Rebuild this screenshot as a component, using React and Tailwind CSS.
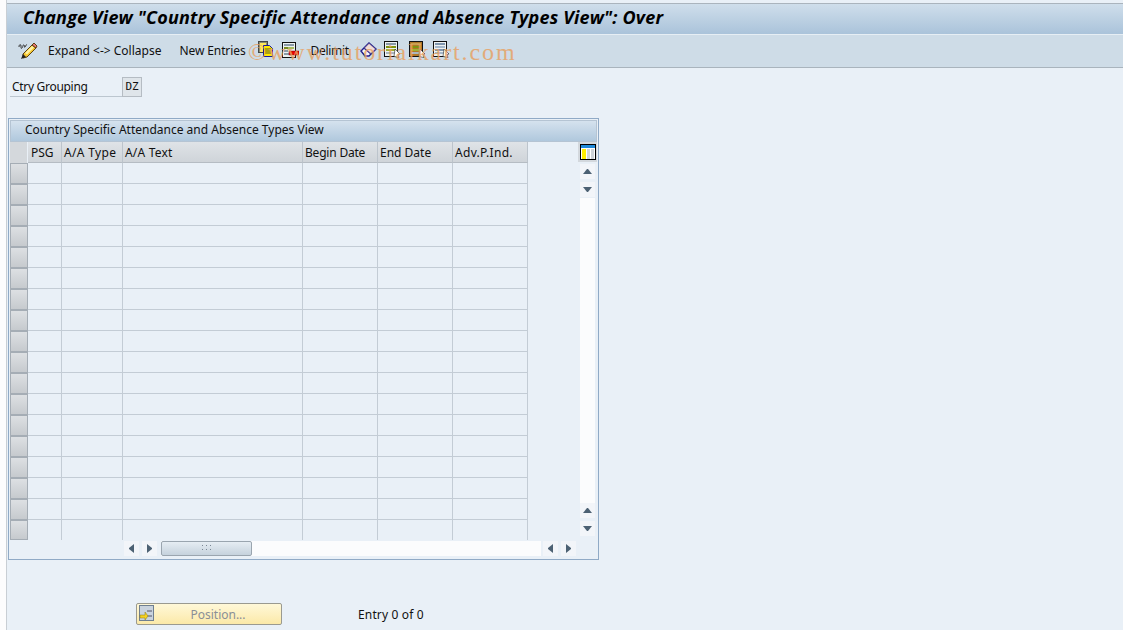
const font = { fontFamily: '"Noto Sans", sans-serif' };

const columns = [
  { label: "PSG", width: "w-[34px]", text: "pl-[3px]" },
  { label: "A/A Type", width: "w-[61px]", text: "pl-[2px] tracking-[0.35px]" },
  { label: "A/A Text", width: "w-[180px]", text: "pl-[2px] tracking-[0.2px]" },
  { label: "Begin Date", width: "w-[75px]", text: "pl-[2px] tracking-[-0.2px]" },
  { label: "End Date", width: "w-[75px]", text: "pl-[2px]" },
  { label: "Adv.P.Ind.", width: "w-[75px]", text: "pl-[2px] tracking-[0.3px]" },
];

const rows = Array.from({ length: 18 }, (_, i) => i);

const Pencil = () => (
  <svg width="20" height="18" viewBox="0 0 20 18">
    <path d="M1 5c0-3 2-3 2-1s0 3 1 2 1-4 2-3 0 3 1 2 1-3 2-2" fill="none" stroke="#333" strokeWidth="1" />
    <path d="M5 12 14 3l4 3-9 9-4 1z" fill="#f6c830" stroke="#5c4010" strokeWidth="1" />
    <path d="M7 11l7-7 2 1.500-7 7z" fill="#fff2a0" />
    <path d="M14 3l2-2 3 3-1 2z" fill="#e87878" stroke="#5c4010" strokeWidth="1" />
    <path d="M5 12l-2 5 5-2z" fill="#222" />
  </svg>
);

const CopyIcon = () => (
  <svg width="16" height="16" viewBox="0 0 16 16">
    <rect x="0.500" y="0.500" width="9" height="11" fill="#8c8c70" stroke="#444" />
    <rect x="2" y="2" width="6" height="9" fill="#ffe95a" />
    <path d="M5.500 4.500h6l3 3v8h-9z" fill="#ffe800" stroke="#1a1a9c" />
    <path d="M7 8h6M7 10h6M7 12h6" stroke="#5a5a20" />
  </svg>
);

const DeleteIcon = () => (
  <svg width="17" height="16" viewBox="0 0 17 16">
    <rect x="0.500" y="0.500" width="13" height="15" fill="#eef2f2" stroke="#111" />
    <path d="M2 2h10v2H2z" fill="#8a9aa8" />
    <path d="M2 5h4v2H2z" fill="#7a8a20" />
    <path d="M6 5h6v2H6z" fill="#a8bc60" />
    <path d="M2 8h4v2H2z" fill="#8a9aa8" />
    <path d="M2 11h5v2H2z" fill="#8a9aa8" />
    <rect x="7" y="9" width="10" height="4" fill="#e80000" stroke="#7a0000" strokeWidth="0.500" />
  </svg>
);

const EraserIcon = () => (
  <svg width="17" height="16" viewBox="0 0 17 16">
    <path d="M1 9 9 1l7 6-7 7-4 0z" fill="#f4f6fa" stroke="#1e1e8c" strokeWidth="1.400" />
    <path d="M4 6l7 6" stroke="#1e1e8c" strokeWidth="1.400" />
    <path d="M9 1l7 6-5 5-7-6z" fill="#f0b8a0" opacity="0.400" />
  </svg>
);

const ListArrow = ({ variant }) => {
  const isPlain = variant === "plain";
  const isBrown = variant === "brown";
  return (
    <svg width="17" height="17" viewBox="0 0 17 17">
      <rect x="0.500" y="0.500" width="13" height="15" fill={isBrown ? "#b07828" : "#eef2f2"} stroke="#111" />
      <path d="M2 2h10v2H2z" fill={isPlain ? "#7f96ae" : isBrown ? "#c8a050" : "#8a9aa8"} />
      <path d="M2 5h10v2H2z" fill={isPlain ? "#a5b8cb" : "#7f9410"} />
      <path d="M2 8h10v2H2z" fill={isPlain ? "#7f96ae" : "#9fb030"} />
      <path d="M2 11h10v2H2z" fill={isPlain ? "#a5b8cb" : "#aab6c0"} />
      <path d="M11 8l5 5-2 .500 1 3-5-1z" fill="#fff" stroke="#222" strokeWidth="0.600" />
    </svg>
  );
};

const Triangle = ({ dir }) => {
  const points = {
    up: "0,5 4,0 5,0 9,5",
    down: "0,0 9,0 5,5 4,5",
    left: "5,0 5,9 0,5 0,4",
    right: "0,0 0,9 5,5 5,4",
  }[dir];
  const vertical = dir === "up" || dir === "down";
  return (
    <svg width={vertical ? 9 : 5} height={vertical ? 5 : 9} viewBox={vertical ? "0 0 9 5" : "0 0 5 9"}>
      <polygon points={points} fill="#4c6173" />
    </svg>
  );
};

const ScrollButton = ({ dir }) => (
  <div className="w-[15px] h-[15px] bg-[#f2f5f9] flex items-center justify-center">
    <Triangle dir={dir} />
  </div>
);

export default function App() {
  return (
    <div className="relative w-[1123px] h-[630px] flex overflow-hidden bg-[#fcfcfd] text-[12px] text-[#111]" style={font}>
      <div className="w-[6px] shrink-0" />
      <div className="flex-1 flex flex-col border-l border-[#c8ced4] bg-[#e9f0f7]">
        {/* Title */}
        <div className="mt-[3px] h-[31px] shrink-0 pl-4 pb-[3px] flex items-center bg-gradient-to-b from-[#cfdeeb] to-[#aac3da] border-t border-[#aab4bd]">
          <h1 className="text-[18px] font-bold italic tracking-[0.17px] text-black whitespace-nowrap" style={{ fontFamily: '"Open Sans", sans-serif' }}>
            Change View "Country Specific Attendance and Absence Types View": Over
          </h1>
        </div>

        {/* Toolbar */}
        <div className="h-[34px] shrink-0 flex items-center pl-[11px] bg-[#cedce7] border-t border-[#e6eef4] border-b border-b-[#a9b4bd]">
          <Pencil />
          <span className="ml-[10px] pb-px">Expand &lt;-&gt; Collapse</span>
          <span className="ml-[18px] pb-px tracking-[-0.1px]">New Entries</span>
          <div className="ml-[12px] pb-[4px]"><CopyIcon /></div>
          <div className="ml-[8px] pb-[3px]"><DeleteIcon /></div>
          <span className="ml-[12px] w-[36px] pb-px tracking-[-0.3px]">Delimit</span>
          <div className="ml-[13px] pb-[3px]"><EraserIcon /></div>
          <div className="ml-[7px] pb-[3px]"><ListArrow variant="green" /></div>
          <div className="ml-[8px] pb-[3px]"><ListArrow variant="brown" /></div>
          <div className="ml-[7px] pb-[3px]"><ListArrow variant="plain" /></div>
        </div>

        {/* Selection field */}
        <div className="h-[26px] mt-[6px] flex items-center shrink-0 pl-[3px]">
          <span className="w-[112px] h-[20px] pl-[2px] leading-[20px] border-b border-[#bcc6cf] tracking-[-0.3px]">Ctry Grouping</span>
          <span className="w-[20px] h-[20px] bg-[#dfe5ea] border border-[#b5bcc3] flex items-center justify-center text-[11px]" style={{ fontFamily: '"DejaVu Sans Mono", monospace' }}>DZ</span>
        </div>

        {/* Table panel */}
        <div className="ml-[1px] mt-[18px] w-[591px] h-[442px] shrink-0 border border-[#90aac6] p-px flex flex-col">
          <div className="h-[22px] shrink-0 pl-[14px] pb-[2px] flex items-center border border-[#b5c4d3] bg-gradient-to-b from-[#d5e2ee] to-[#b0c8dd]">
            Country Specific Attendance and Absence Types View
          </div>
          <div className="flex flex-1">
            <div className="w-[518px]">
              <div className="flex h-[21px]">
                <div className="w-[18px] bg-[#d4d8dc] border-r border-[#e9f0f7]" />
                {columns.map((col) => (
                  <div key={col.label} className={`${col.width} ${col.text} leading-[21px] bg-gradient-to-b from-[#dfe3e7] to-[#cfd4d9] border-r border-[#bcc4cc] border-b border-b-[#b5bcc3]`}>
                    {col.label}
                  </div>
                ))}
              </div>
              {rows.map((row) => (
                <div key={row} className={row === 17 ? "flex h-[20px]" : "flex h-[21px]"}>
                  <div className="w-[18px] bg-gradient-to-b from-[#dde0e3] to-[#c6cace] border border-[#a5adb5]" />
                  {columns.map((col) => (
                    <div key={col.label} className={`${col.width} border-r border-[#c3ccd5] ${row === 17 ? "" : "border-b border-b-[#c3ccd5]"}`} />
                  ))}
                </div>
              ))}
            </div>
            <div className="ml-[50px] w-[19px] flex flex-col items-center">
              <div className="w-[19px] h-[20px] pt-[2px] bg-[#d3d8dd] flex items-start justify-center">
                <svg width="16" height="16" viewBox="0 0 16 16">
                  <rect x="0.500" y="0.500" width="15" height="15" fill="#fff" stroke="#000" />
                  <rect x="1" y="1" width="14" height="3" fill="#1e88d8" />
                  <rect x="2" y="5" width="4" height="10" fill="#ffee00" />
                  <rect x="7" y="5" width="3" height="10" fill="#cfd4d8" />
                  <rect x="11" y="5" width="3" height="10" fill="#cfd4d8" />
                </svg>
              </div>
              <div className="mt-[2px] flex flex-col gap-[3px] items-center">
                <ScrollButton dir="up" />
                <ScrollButton dir="down" />
              </div>
              <div className="w-[15px] h-[305px] mt-[1px] bg-[#fbfcfd]" />
              <div className="flex flex-col gap-[3px] items-center">
                <ScrollButton dir="up" />
                <ScrollButton dir="down" />
              </div>
            </div>
          </div>
          {/* Horizontal scrollbar */}
          <div className="h-[16px] shrink-0 mb-[10px] flex items-center pl-[114px]">
            <ScrollButton dir="left" />
            <div className="ml-[3px]"><ScrollButton dir="right" /></div>
            <div className="ml-[4px] w-[380px] h-[15px] flex bg-[#fbfcfd]">
              <div className="w-[91px] h-[15px] border border-[#9aa5af] rounded-[2px] bg-gradient-to-b from-[#e6edf3] to-[#c5d2dd] flex items-center justify-center">
                <svg width="9" height="6" viewBox="0 0 9 6">
                  <path d="M0 0h1v1H0zM4 0h1v1H4zM8 0h1v1H8zM0 4h1v1H0zM4 4h1v1H4zM8 4h1v1H8z" fill="#7a8794" />
                </svg>
              </div>
            </div>
            <div className="ml-[2px]"><ScrollButton dir="left" /></div>
            <div className="ml-[3px]"><ScrollButton dir="right" /></div>
          </div>
        </div>

        {/* Footer */}
        <div className="mt-[43px] flex items-center shrink-0">
          <div className="ml-[129px] w-[146px] h-[22px] relative flex items-center justify-center pl-[18px] pt-px rounded-[2px] border border-[#9a9a90] bg-gradient-to-b from-[#fff8d8] to-[#fbe9a8] text-[#8a8f96]">
            <svg className="absolute left-[2px] top-[1px]" width="15" height="17" viewBox="0 0 15 17">
              <rect x="0.500" y="0.500" width="14" height="15" fill="#c9d3de" stroke="#6f7f90" />
              <path d="M8 6h5M8 11h5" stroke="#556" />
              <path d="M1 10h5V7l3 4-3 4v-2H1z" fill="#f5d020" stroke="#8a7a10" strokeWidth="0.500" />
            </svg>
            Position...
          </div>
          <span className="ml-[76px] pt-px tracking-[0.15px]">Entry 0 of 0</span>
        </div>
      </div>

      {/* Watermark */}
      <div className="absolute left-[248px] top-[38px] text-[24px] leading-[28px] tracking-[1.900px] text-[#e8a060] opacity-80 whitespace-nowrap pointer-events-none" style={{ fontFamily: '"Liberation Serif", serif' }}>
        ©www.tutorialkart.com
      </div>
    </div>
  );
}
